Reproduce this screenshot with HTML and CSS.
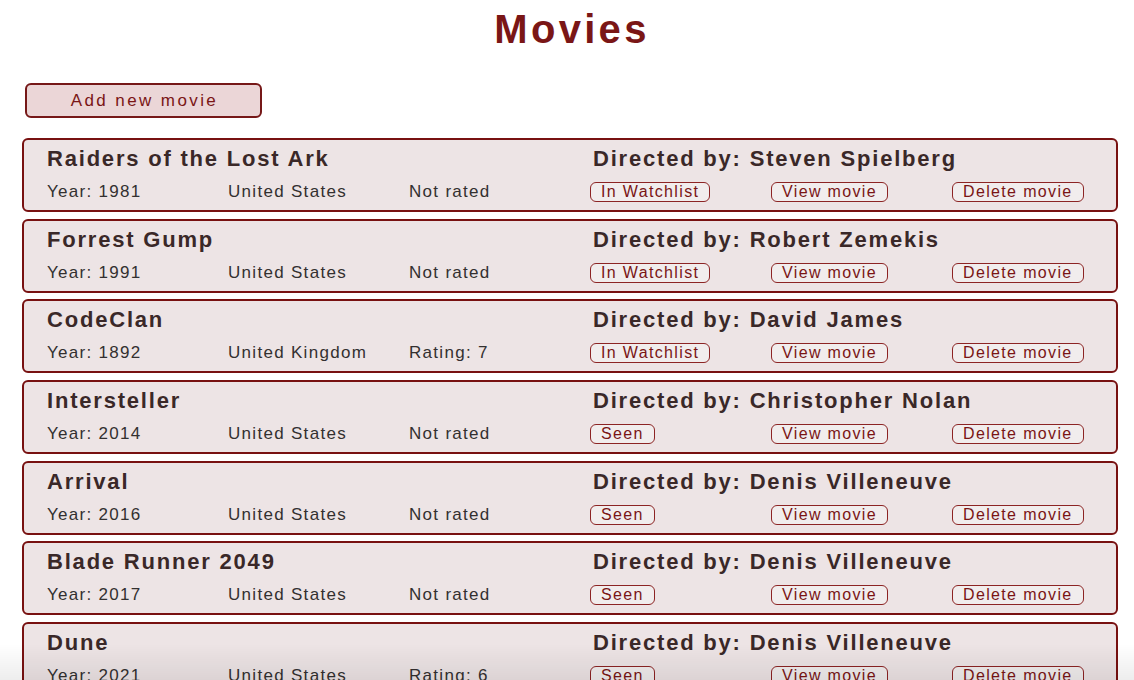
FILE: index.html
```html
<!DOCTYPE html>
<html lang="en">
<head>
<meta charset="utf-8">
<title>Movies</title>
<link rel="stylesheet" href="styles.css">
</head>
<body>
<main class="page">
  <h1 class="page-title">Movies</h1>
  <button class="add-btn">Add new movie</button>
  <ul class="movie-list">
    <li class="movie-card">
      <h2 class="movie-title">Raiders of the Lost Ark</h2>
      <h2 class="movie-director">Directed by: Steven Spielberg</h2>
      <span class="movie-info">Year: 1981</span>
      <span class="movie-info">United States</span>
      <span class="movie-info">Not rated</span>
      <span class="cell"><button class="small-btn">In Watchlist</button></span>
      <span class="cell"><button class="small-btn">View movie</button></span>
      <span class="cell"><button class="small-btn">Delete movie</button></span>
    </li>
    <li class="movie-card">
      <h2 class="movie-title">Forrest Gump</h2>
      <h2 class="movie-director">Directed by: Robert Zemekis</h2>
      <span class="movie-info">Year: 1991</span>
      <span class="movie-info">United States</span>
      <span class="movie-info">Not rated</span>
      <span class="cell"><button class="small-btn">In Watchlist</button></span>
      <span class="cell"><button class="small-btn">View movie</button></span>
      <span class="cell"><button class="small-btn">Delete movie</button></span>
    </li>
    <li class="movie-card">
      <h2 class="movie-title">CodeClan</h2>
      <h2 class="movie-director">Directed by: David James</h2>
      <span class="movie-info">Year: 1892</span>
      <span class="movie-info">United Kingdom</span>
      <span class="movie-info">Rating: 7</span>
      <span class="cell"><button class="small-btn">In Watchlist</button></span>
      <span class="cell"><button class="small-btn">View movie</button></span>
      <span class="cell"><button class="small-btn">Delete movie</button></span>
    </li>
    <li class="movie-card">
      <h2 class="movie-title">Intersteller</h2>
      <h2 class="movie-director">Directed by: Christopher Nolan</h2>
      <span class="movie-info">Year: 2014</span>
      <span class="movie-info">United States</span>
      <span class="movie-info">Not rated</span>
      <span class="cell"><button class="small-btn">Seen</button></span>
      <span class="cell"><button class="small-btn">View movie</button></span>
      <span class="cell"><button class="small-btn">Delete movie</button></span>
    </li>
    <li class="movie-card">
      <h2 class="movie-title">Arrival</h2>
      <h2 class="movie-director">Directed by: Denis Villeneuve</h2>
      <span class="movie-info">Year: 2016</span>
      <span class="movie-info">United States</span>
      <span class="movie-info">Not rated</span>
      <span class="cell"><button class="small-btn">Seen</button></span>
      <span class="cell"><button class="small-btn">View movie</button></span>
      <span class="cell"><button class="small-btn">Delete movie</button></span>
    </li>
    <li class="movie-card">
      <h2 class="movie-title">Blade Runner 2049</h2>
      <h2 class="movie-director">Directed by: Denis Villeneuve</h2>
      <span class="movie-info">Year: 2017</span>
      <span class="movie-info">United States</span>
      <span class="movie-info">Not rated</span>
      <span class="cell"><button class="small-btn">Seen</button></span>
      <span class="cell"><button class="small-btn">View movie</button></span>
      <span class="cell"><button class="small-btn">Delete movie</button></span>
    </li>
    <li class="movie-card">
      <h2 class="movie-title">Dune</h2>
      <h2 class="movie-director">Directed by: Denis Villeneuve</h2>
      <span class="movie-info">Year: 2021</span>
      <span class="movie-info">United States</span>
      <span class="movie-info">Rating: 6</span>
      <span class="cell"><button class="small-btn">Seen</button></span>
      <span class="cell"><button class="small-btn">View movie</button></span>
      <span class="cell"><button class="small-btn">Delete movie</button></span>
    </li>
  </ul>
</main>
<div class="bottom-fade"></div>
</body>
</html>
```

FILE: styles.css
```css
html, body {
  margin: 0;
  padding: 0;
  background: #ffffff;
  font-family: "Liberation Sans", Arial, Helvetica, sans-serif;
  overflow: hidden;
}

.page {
  width: 1096px;
  margin-left: 22px;
  display: flex;
  flex-direction: column;
  align-items: flex-start;
}

.page-title {
  align-self: stretch;
  margin: 7px 0 0 0;
  padding-left: 4px;
  height: 45px;
  line-height: 45px;
  font-size: 40px;
  font-weight: bold;
  letter-spacing: 3.3px;
  text-align: center;
  color: #7a1616;
}

.add-btn {
  margin: 31px 0 0 3px;
  width: 237px;
  height: 35px;
  box-sizing: border-box;
  border: 2px solid #761818;
  border-radius: 6px;
  background: #ebd6d7;
  color: #7a1515;
  font-family: inherit;
  font-size: 17px;
  letter-spacing: 2.4px;
  padding: 0 0 0 2px;
  cursor: pointer;
}

.movie-list {
  list-style: none;
  margin: 20px 0 0 0;
  padding: 0;
  align-self: stretch;
  display: flex;
  flex-direction: column;
  gap: 6.67px;
}

.movie-card {
  box-sizing: border-box;
  height: 74px;
  border: 2px solid #781111;
  border-radius: 6px;
  background: #ede4e5;
  padding: 8px 0 0 23px;
  display: grid;
  grid-template-columns: repeat(5, 181px) 1fr;
  grid-template-rows: 22px 20px;
  row-gap: 12px;
  align-items: center;
}

.movie-title,
.movie-director {
  margin: 0;
  font-size: 22px;
  line-height: 22px;
  font-weight: bold;
  letter-spacing: 1.8px;
  color: #3a2828;
  white-space: nowrap;
}

.movie-title {
  grid-column: 1 / span 3;
}

.movie-director {
  grid-column: 4 / span 3;
  padding-left: 3px;
}

.movie-info {
  font-size: 17px;
  line-height: 20px;
  letter-spacing: 1.3px;
  color: #333030;
  white-space: nowrap;
}

.cell {
  display: flex;
  align-items: center;
}

.small-btn {
  height: 20px;
  box-sizing: border-box;
  border: 1px solid #8c2424;
  border-radius: 6px;
  background: #f1eded;
  color: #7a1515;
  font-family: inherit;
  font-size: 16px;
  line-height: 18px;
  letter-spacing: 1.35px;
  padding: 0 10px 0 10px;
  white-space: nowrap;
  cursor: pointer;
}

.bottom-fade {
  position: fixed;
  left: 0;
  right: 0;
  bottom: 0;
  height: 36px;
  background: linear-gradient(to bottom, rgba(0, 0, 0, 0), rgba(0, 0, 0, 0.07));
  pointer-events: none;
}
```
